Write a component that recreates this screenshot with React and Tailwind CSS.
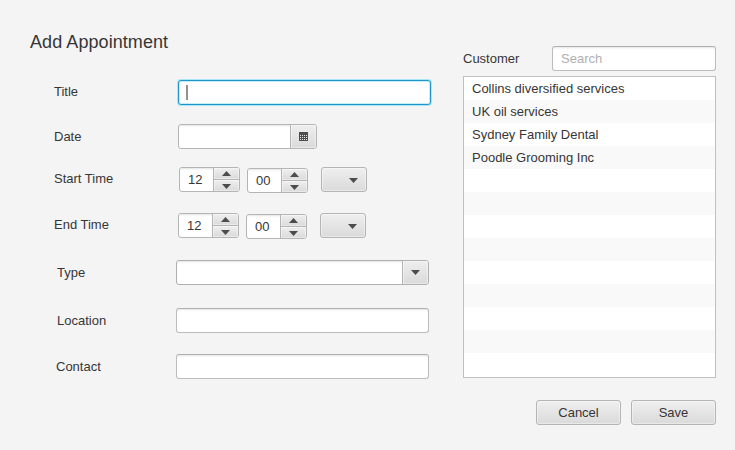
import React from 'react';

const CUSTOMERS = [
  'Collins diversified services',
  'UK oil services',
  'Sydney Family Dental',
  'Poodle Grooming Inc',
];

const FIELD =
  'h-[25px] rounded-[3px] border border-[#bcbcbc] border-t-[#b0b0b0] bg-white shadow-[inset_0_2px_2px_-1px_#e4e4e4] outline-none';
const FACE = 'bg-gradient-to-b from-[#efefef] to-[#dadada] shadow-[inset_0_0_0_1px_#ffffff66]';

function Arrow({ up = false }) {
  return (
    <svg width="9" height="5" viewBox="0 0 9 5" className="block">
      <path d={up ? 'M0 5 4.5 0 9 5Z' : 'M0 0h9L4.5 5Z'} fill="#4c4c4c" />
    </svg>
  );
}

function CalendarIcon() {
  return (
    <svg width="9" height="9" viewBox="0 0 9 9" className="block" shapeRendering="crispEdges">
      <path d="M0 0h9v9H0Z" fill="#4c4c4c" />
      {[3, 5, 7].map((y) =>
        [1, 3, 5, 7].map((x) => <path key={`${x}-${y}`} d={`M${x} ${y}h1v1h-1Z`} fill="#e6e6e6" />)
      )}
    </svg>
  );
}

function Row({ label, className, labelClass = '', children }) {
  return (
    <div className={`flex h-[25px] ${className}`}>
      <span className={`shrink-0 leading-[25px] ${labelClass}`}>{label}</span>
      {children}
    </div>
  );
}

function Spinner({ value, className = '' }) {
  return (
    <div className={`flex h-[25px] w-[61px] overflow-hidden rounded-[3px] border border-[#b5b5b5] bg-white ${className}`}>
      <span className="w-[33px] pl-2 leading-[23px] shadow-[inset_0_2px_2px_-1px_#e4e4e4]">{value}</span>
      <div className="flex flex-1 flex-col border-l border-[#b5b5b5]">
        <div className={`flex h-3 items-center justify-center border-b border-[#b5b5b5] ${FACE}`}>
          <Arrow up />
        </div>
        <div className={`flex flex-1 items-center justify-center pt-px ${FACE}`}>
          <Arrow />
        </div>
      </div>
    </div>
  );
}

function TimeFields() {
  return (
    <>
      <Spinner value="12" />
      <Spinner value="00" className="mt-px ml-[7px]" />
      <button
        className={`ml-[13px] flex h-[25px] w-[46px] items-center justify-end rounded-[3px] border border-[#b5b5b5] pt-px pr-2 ${FACE}`}
      >
        <Arrow />
      </button>
    </>
  );
}

export default function App() {
  return (
    <div className="flex h-[450px] w-[735px] overflow-hidden bg-[#f4f4f4] font-['Liberation_Sans',Arial,sans-serif] text-[13px] text-[#363636]">
      <form className="w-[463px] pt-[30px]">
        <h1 className="ml-[30px] h-[50px] text-[18px] leading-[24px] tracking-[0.07px]">Add Appointment</h1>
        <Row label="Title" className="pl-[54px]" labelClass="w-[124px] -mt-px">
          <div className="flex h-[25px] w-[253px] items-center rounded-[3px] border border-[#1f96c8] bg-white pl-[7px] shadow-[0_0_0_1px_#a9e6fa,inset_0_0_0_1px_#c4eefb]">
            <span className="h-[15px] w-[2px] bg-[#969088]" />
          </div>
        </Row>
        <Row label="Date" className="mt-[19px] pl-[54px]" labelClass="w-[124px]">
          <div className="flex h-[25px] w-[139px] overflow-hidden rounded-[3px] border border-[#b5b5b5] bg-white">
            <span className="w-[111px] shadow-[inset_0_2px_2px_-1px_#e4e4e4]" />
            <span className={`flex flex-1 items-center justify-center border-l border-[#b5b5b5] ${FACE}`}>
              <CalendarIcon />
            </span>
          </div>
        </Row>
        <Row label="Start Time" className="mt-[18px] pl-[54px]" labelClass="w-[125px] -mt-px">
          <TimeFields />
        </Row>
        <Row label="End Time" className="mt-[21px] pl-[54px]" labelClass="w-[124px] -mt-px">
          <TimeFields />
        </Row>
        <Row label="Type" className="mt-[22px] pl-[57px]" labelClass="w-[119px]">
          <div className="flex h-[25px] w-[253px] overflow-hidden rounded-[3px] border border-[#b0b0b0] bg-white">
            <span className="w-[225px] shadow-[inset_0_2px_2px_-1px_#e4e4e4]" />
            <span className={`flex flex-1 items-center justify-center border-l border-[#b5b5b5] ${FACE}`}>
              <Arrow />
            </span>
          </div>
        </Row>
        <Row label="Location" className="mt-[23px] pl-[57px]" labelClass="w-[119px]">
          <input className={`w-[253px] ${FIELD}`} />
        </Row>
        <Row label="Contact" className="mt-[21px] pl-[56px]" labelClass="w-[120px]">
          <input className={`w-[253px] ${FIELD}`} />
        </Row>
      </form>

      <section className="w-[253px] pt-[46px]">
        <div className="flex h-[25px] justify-between">
          <span className="leading-[25px]">Customer</span>
          <input
            placeholder="Search"
            className={`w-[164px] px-2 placeholder:text-[#b0b0b0] placeholder:opacity-100 ${FIELD}`}
          />
        </div>
        <ul className="mt-[5px] h-[302px] overflow-hidden border border-[#c0c0c0] bg-white">
          {Array.from({ length: 13 }, (_, i) => (
            <li key={i} className="h-[23px] pl-2 leading-[23px] even:bg-[#f9f9f9]">
              {CUSTOMERS[i]}
            </li>
          ))}
        </ul>
        <div className="mt-[22px] flex justify-end gap-[10px]">
          {['Cancel', 'Save'].map((name) => (
            <button key={name} className={`h-[25px] w-[85px] rounded-[3px] border border-[#b5b5b5] leading-[23px] ${FACE}`}>
              {name}
            </button>
          ))}
        </div>
      </section>
    </div>
  );
}
